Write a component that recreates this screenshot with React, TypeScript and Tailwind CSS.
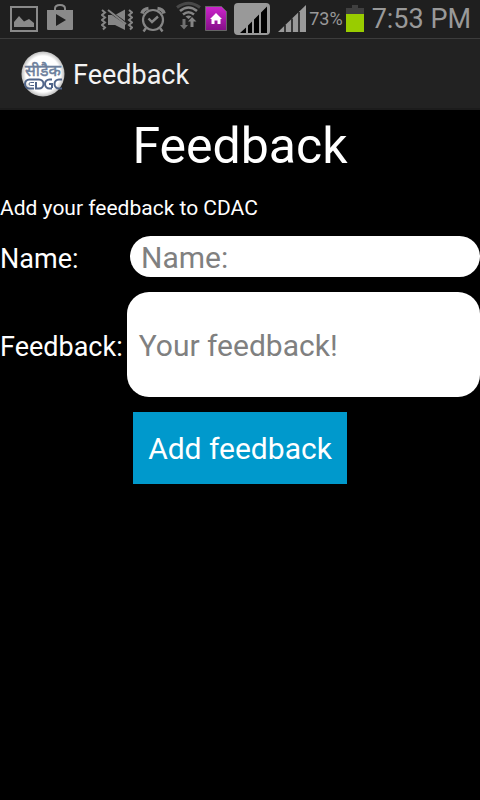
import React from 'react';

function StatusBar() {
  return (
    <div className="flex h-[38px] items-center justify-between bg-[#1f1f1f] px-[9px] text-[#999999]">
      <div className="flex items-center gap-[9px]">
        <svg width="29" height="38" viewBox="0 0 29 38" aria-hidden="true">
          <rect x="2" y="7" width="26" height="24" fill="none" stroke="#8a8a8a" strokeWidth="2" />
          <path d="M5 27V22L10 16L15 21.500L20 19L25 23V27Z" fill="#8a8a8a" />
        </svg>
        <svg width="26" height="38" viewBox="0 0 26 38" aria-hidden="true">
          <path d="M8 11V8.500Q8 5 13 5Q18 5 18 8.500V11" fill="none" stroke="#8a8a8a" strokeWidth="2" />
          <path d="M0 10H26V29Q26 30 25 30H1Q0 30 0 29Z" fill="#8a8a8a" />
          <path d="M9 14L19 20L9 26Z" fill="#1f1f1f" />
        </svg>
      </div>
      <div className="flex items-center">
        <svg className="mr-[7px]" width="32" height="38" viewBox="0 0 32 38" aria-hidden="true">
          <path d="M1 10L4 12.500L1 15L4 17.500L1 20L4 22.500L1 25L4 27.500L2 29.500" fill="none" stroke="#858585" strokeWidth="2" />
          <path d="M28 10L31 12.500L28 15L31 17.500L28 20L31 22.500L28 25L31 27.500L29 29.500" fill="none" stroke="#858585" strokeWidth="2" />
          <path d="M7 15H11L24 24V30L14 25H7Z" fill="#858585" />
          <path d="M15 14.500L24 9.500V21Z" fill="#858585" />
          <path d="M7 10L25 24" stroke="#858585" strokeWidth="2" />
        </svg>
        <svg className="mr-[10px]" width="26" height="38" viewBox="0 0 26 38" fill="none" stroke="#858585" aria-hidden="true">
          <circle cx="13" cy="20" r="10" strokeWidth="2.200" />
          <path d="M8.500 18.500L12 22L18 16.500" strokeWidth="2.400" />
          <path d="M2 13.500Q3 9 8.500 8.500M24 13.500Q23 9 17.500 8.500" strokeWidth="3.600" />
          <path d="M6 28L3.500 31.500M20 28L22.500 31.500" strokeWidth="2.400" />
        </svg>
        <svg className="mr-[4px]" width="25" height="38" viewBox="0 0 25 38" fill="none" aria-hidden="true">
          <path d="M1 7.500Q12.500-1 24 7.500" stroke="#484848" strokeWidth="3" />
          <path d="M4 11Q12.500 4 21 11" stroke="#858585" strokeWidth="2.600" />
          <path d="M7 14.500Q12.500 10 18 14.500" stroke="#858585" strokeWidth="2.600" />
          <path d="M9.500 16.500Q12.500 14.500 15.500 16.500L12.500 19Z" fill="#858585" />
          <path d="M6.500 19H9.500V25H12L8 29.500L4 25H6.500Z" fill="#707070" />
          <path d="M14.500 27H17.500V21.500H20.500L16 17L12 21.500H14.500Z" fill="#858585" />
        </svg>
        <svg className="mr-[7px]" width="22" height="38" viewBox="0 0 22 38" aria-hidden="true">
          <defs>
            <linearGradient id="homeCard" x1="0" y1="0" x2="0" y2="1">
              <stop offset="0" stopColor="#cc25cc" />
              <stop offset="1" stopColor="#850f88" />
            </linearGradient>
          </defs>
          <path d="M.5 6.500H16.500L21.500 11.500V30.500H.5Z" fill="url(#homeCard)" stroke="#666666" />
          <path d="M11 13L17 19H15.500V24H12.500V20.500H9.500V24H6.500V19H5Z" fill="#ffffff" />
        </svg>
        <svg className="mr-[8px]" width="36" height="38" viewBox="0 0 36 38" aria-hidden="true">
          <rect x="0" y="3" width="36" height="32" rx="4" fill="#999999" />
          <path d="M6 33L12 27.500V33ZM14 33V25.500L18 21.500V33ZM20 33V19.500L25 14.500V33ZM27 33V12.500L33 6.500V33Z" fill="#000000" />
        </svg>
        <svg className="mr-[3px]" width="28" height="38" viewBox="0 0 28 38" aria-hidden="true">
          <path d="M0 32L28 5V32Z" fill="#999999" />
          <path d="M7 25V32M14 18.500V32M21 12V32" stroke="#1f1f1f" strokeWidth="1.600" />
        </svg>
        <span className="mr-[3px] text-[18px] leading-[38px]">73%</span>
        <svg className="mr-[8px]" width="18" height="38" viewBox="0 0 18 38" aria-hidden="true">
          <path d="M0 8H6V5H12V8H18V14H0Z" fill="#404040" />
          <rect x="0" y="14" width="18" height="18" fill="#99cc00" />
        </svg>
        <span className="text-[27px] leading-[38px]">7:53 PM</span>
      </div>
    </div>
  );
}

function Logo() {
  return (
    <svg width="44" height="46" viewBox="0 0 44 46" role="img" aria-label="CDAC">
      <defs>
        <radialGradient id="disc">
          <stop offset="0.800" stopColor="#ffffff" />
          <stop offset="1" stopColor="#bdbdbd" />
        </radialGradient>
      </defs>
      <ellipse cx="22" cy="23" rx="21.500" ry="22.500" fill="url(#disc)" />
      <text x="4" y="25" fontSize="16" fill="#6d7f9c" stroke="#6d7f9c" strokeWidth="0.500" fontFamily="'Noto Sans Devanagari','Noto Sans',sans-serif">सीडैक</text>
      <g fill="none" stroke="#50658a" strokeWidth="2">
        <path d="M13 28.500H8.500A4.500 4.500 0 0 0 8.500 37.500H13" />
        <path d="M13 31.500H9.500A1.500 1.500 0 0 0 9.500 34.500H13" strokeWidth="1" />
        <path d="M15 31V37.500H18A4.500 4.500 0 0 0 18 28.500H13" />
        <path d="M31 28.500H28.500A4.500 4.500 0 0 0 28.500 37.500H31M28 33H31V37" />
        <path d="M41 28.500H38A4.500 4.500 0 0 0 38 37.500H41" />
      </g>
    </svg>
  );
}

export default function App() {
  return (
    <div className="min-h-screen bg-black font-[Roboto,sans-serif] text-white">
      <StatusBar />
      <header className="flex h-[72px] items-center gap-[8px] border-t border-b-2 border-t-[#3c3c3c] border-b-[#1c1c1c] bg-[#222222] pl-[21px]">
        <Logo />
        <span className="pt-[2px] text-[27px] leading-[32px] text-[#f3f3f3]">Feedback</span>
      </header>
      <main>
        <h1 className="pt-[6px] text-center text-[50px] leading-[60px]">Feedback</h1>
        <p className="pt-[19px] text-[21px] leading-[26px]">Add your feedback to CDAC</p>
        <form onSubmit={(e) => e.preventDefault()}>
          <div className="mt-[15px] flex items-center">
            <label htmlFor="name" className="w-[130px] pt-[4px] text-[27px] leading-[32px]">Name:</label>
            <input
              id="name"
              type="text"
              placeholder="Name:"
              className="h-[41px] min-w-0 flex-1 rounded-[21px] bg-white px-[11px] pt-[2px] text-[30px] text-black outline-none placeholder:text-[#808080]"
            />
          </div>
          <div className="mt-[15px] flex items-center gap-[4px]">
            <label htmlFor="feedback" className="pt-[4px] text-[27px] leading-[32px]">Feedback:</label>
            <textarea
              id="feedback"
              placeholder="Your feedback!"
              className="h-[105px] min-w-0 flex-1 resize-none rounded-[22px] bg-white px-[12px] pt-[36px] text-[30px] leading-[36px] text-black outline-none placeholder:text-[#808080]"
            />
          </div>
          <button type="submit" className="mx-auto mt-[15px] block h-[72px] bg-[#0099cc] px-[15px] pt-[2px] text-[30px] leading-[36px]">
            Add feedback
          </button>
        </form>
      </main>
    </div>
  );
}
